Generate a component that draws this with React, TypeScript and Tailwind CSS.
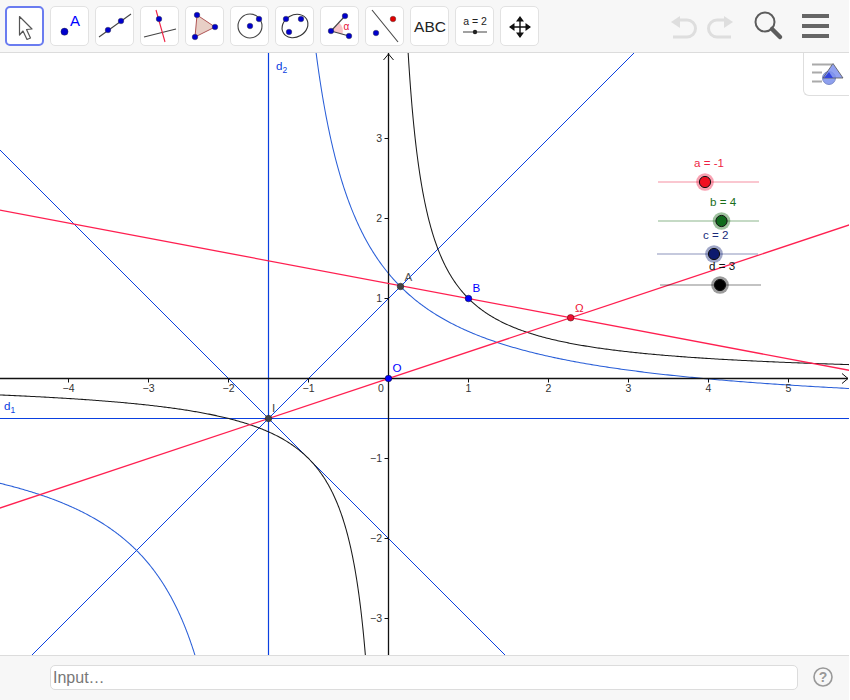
import React from "react";

const X = (x: number) => 388.5 + x * 80;
const Y = (y: number) => 378.5 - y * 80;
const L = (x1: number, y1: number, x2: number, y2: number) => ({ x1: X(x1), y1: Y(y1), x2: X(x2), y2: Y(y2) });

function hyper(cx: number, cy: number, k: number, from: number, to: number) {
  const pts: string[] = [];
  const n = 400;
  for (let i = 0; i <= n; i++) {
    const t = i / n;
    // denser sampling near the asymptote
    const x = from + (to - from) * t * t;
    const y = cy + k / (x - cx);
    pts.push(`${X(x).toFixed(2)},${Y(y).toFixed(2)}`);
  }
  return pts.join(" ");
}

const BLUE = "#0000cc";

function Dot({ x, y, r = 2.8, fill = BLUE }: { x: number; y: number; r?: number; fill?: string }) {
  return <circle cx={x} cy={y} r={r} fill={fill} stroke="#333" strokeWidth={0.4} />;
}

const icons: React.ReactNode[] = [
  <path d="M13.5 9.5 L26 22 L20.5 22.5 L24.5 31 L21 32.5 L17 24 L13.5 28 Z" fill="#fff" stroke="#555" strokeWidth="1.2" strokeLinejoin="round" />,
  <>
    <Dot x={14.5} y={25.7} r={3.6} />
    <text x={20} y={20} fontSize="15" fill="#0000ff" fontFamily="Liberation Sans">A</text>
  </>,
  <>
    <line x1="4" y1="31" x2="36" y2="8" stroke="#444" strokeWidth="1.1" />
    <Dot x={13} y={24} />
    <Dot x={26} y={15} />
  </>,
  <>
    <line x1="4" y1="31" x2="36" y2="23" stroke="#444" strokeWidth="1.1" />
    <line x1="16" y1="4" x2="25" y2="36" stroke="#ee2244" strokeWidth="1.1" />
    <Dot x={19} y={13} />
  </>,
  <>
    <polygon points="12,9 30,21 10,31" fill="#e8cfc6" stroke="#b05555" strokeWidth="1" />
    <Dot x={12} y={9} />
    <Dot x={30} y={21} />
    <Dot x={10} y={31} />
  </>,
  <>
    <circle cx="20" cy="20" r="12" fill="none" stroke="#444" strokeWidth="1.1" />
    <Dot x={20} y={20} />
    <Dot x={29} y={13} />
  </>,
  <>
    <ellipse cx="20" cy="20" rx="13.5" ry="11" transform="rotate(-30 20 20)" fill="none" stroke="#333" strokeWidth="1.1" />
    <Dot x={11} y={13} />
    <Dot x={26} y={13} />
    <Dot x={14} y={26} />
  </>,
  <>
    <path d="M11 25 L19 16.5 A12 12 0 0 1 22.5 28 Z" fill="#f8c4c8" />
    <line x1="11" y1="25" x2="25" y2="10" stroke="#444" strokeWidth="1.1" />
    <line x1="11" y1="25" x2="29" y2="30" stroke="#444" strokeWidth="1.1" />
    <Dot x={11} y={25} />
    <Dot x={25} y={10} />
    <Dot x={29} y={30} />
    <text x={23.5} y={24} fontSize="10" fill="#e8103a" fontFamily="Liberation Sans">α</text>
  </>,
  <>
    <line x1="7" y1="4" x2="33" y2="36" stroke="#444" strokeWidth="1.1" />
    <Dot x={28} y={13} fill="#e00000" />
    <Dot x={11} y={27} />
  </>,
  <text x="20" y="25.5" fontSize="15.5" textAnchor="middle" fill="#222" fontFamily="Liberation Sans">ABC</text>,
  <>
    <text x="20" y="19" fontSize="10.5" textAnchor="middle" fill="#222" fontFamily="Liberation Sans">a = 2</text>
    <line x1="8" y1="26" x2="32" y2="26" stroke="#555" strokeWidth="1.1" />
    <circle cx="20" cy="26" r="2.2" fill="#222" />
  </>,
  <>
    <path d="M20 12 V31 M10 21 H30" stroke="#111" strokeWidth="1.4" />
    <path d="M20 10 L24 15.5 H16 Z M20 32 L24 26.5 H16 Z M9 21 L14.5 17 V25 Z M31 21 L25.5 17 V25 Z" fill="#111" />
  </>,
];

const xTicks = [-4, -3, -2, -1, 1, 2, 3, 4, 5];
const yTicks = [-3, -2, -1, 1, 2, 3];
const FONT = "Liberation Sans";

function Slider({ x, y, dot, color, stroke, label, lx, ly }: { x: number; y: number; dot: number; color: string; stroke: string; label: string; lx: number; ly: number }) {
  return (
    <g>
      <line x1={x} y1={y} x2={x + 101} y2={y} stroke={stroke} strokeOpacity="0.5" strokeWidth="1.1" />
      <circle cx={dot} cy={y} r={8.8} fill={stroke} fillOpacity="0.42" />
      <circle cx={dot} cy={y} r={5.6} fill={color} stroke="#111" strokeWidth="1" />
      <text x={lx} y={ly} fontSize="11.6" fill={stroke} fontFamily={FONT}>{label}</text>
    </g>
  );
}

const LINE = "#0a40e0";
const CURVE = "#2a5fd8";
const RED = "#ff1f50";

export default function App() {
  return (
    <div className="flex h-[700px] w-[850px] flex-col bg-white font-['Liberation_Sans',sans-serif]">
      <header className="flex h-[53px] w-[849px] shrink-0 items-start border-b border-[#dcdcdc] bg-[#f7f7f7] pl-[5px] pt-[6px]">
        <div className="flex gap-[6px]">
          {icons.map((icon, i) => (
            <button
              key={i}
              className={
                i === 0
                  ? "h-[40px] w-[39px] rounded-[5px] border-2 border-[#6a7cf0] bg-white"
                  : "h-[40px] w-[39px] rounded-[5px] border border-[#e2e2e2] bg-white"
              }
            >
              <svg viewBox="0 0 39 40" className="-m-[1px] h-[40px] w-[39px]">
                {icon}
              </svg>
            </button>
          ))}
        </div>
        <div className="ml-[130px] mt-[7px] flex items-center">
          <svg width="30" height="26" viewBox="0 0 30 26">
            <path d="M11 5 H18 A8 8 0 0 1 18 22 H4" fill="none" stroke="#dedede" strokeWidth="3" />
            <path d="M2 7 L11 1 V13 Z" fill="#dedede" />
          </svg>
          <svg width="30" height="26" viewBox="0 0 30 26" className="ml-[6px]">
            <path d="M19 5 H12 A8 8 0 0 0 12 22 H26" fill="none" stroke="#dedede" strokeWidth="3" />
            <path d="M28 7 L19 1 V13 Z" fill="#dedede" />
          </svg>
          <svg width="32" height="32" viewBox="0 0 32 32" className="ml-[18px] -mt-[3px]">
            <circle cx="12" cy="12" r="9.5" fill="none" stroke="#5c5c5c" strokeWidth="2" />
            <line x1="19" y1="19" x2="27" y2="27" stroke="#5c5c5c" strokeWidth="4.5" strokeLinecap="round" />
          </svg>
          <div className="ml-[17px] -mt-[4px] flex flex-col gap-[6px]">
            <div className="h-[4px] w-[27px] bg-[#666666]" />
            <div className="h-[4px] w-[27px] bg-[#666666]" />
            <div className="h-[4px] w-[27px] bg-[#666666]" />
          </div>
        </div>
      </header>

      <main className="relative h-[602px] w-[849px] shrink-0 overflow-hidden bg-white">
        <svg viewBox="0 53 849 602" className="block h-[602px] w-[849px]">
          {/* asymptotes */}
          <line x1="0" y1="418.5" x2="849" y2="418.5" stroke={LINE} strokeWidth="1.2" />
          <line x1="268.5" y1="53" x2="268.5" y2="655" stroke={LINE} strokeWidth="1.2" />
          {/* diagonals */}
          <line {...L(-5, -4, 3.5, 4.5)} stroke={LINE} strokeWidth="1" />
          <line {...L(-5, 3, 2, -4)} stroke={LINE} strokeWidth="1" />

          {/* hyperbolas */}
          <polyline points={hyper(-1.5, -0.5, 2.72, -0.92, 5.8)} fill="none" stroke={CURVE} strokeWidth="1.05" />
          <polyline points={hyper(-1.5, -0.5, 2.72, -2.1, -4.9)} fill="none" stroke={CURVE} strokeWidth="1.05" />
          <polyline points={hyper(0, 0, 1, 0.22, 5.8)} fill="none" stroke="#1a1a1a" strokeWidth="1.05" />
          <polyline points={hyper(0, 0, 1, -0.25, -4.9)} fill="none" stroke="#1a1a1a" strokeWidth="1.05" />

          {/* axes */}
          <line x1="0" y1="378.5" x2="848" y2="378.5" stroke="#111" strokeWidth="1.3" />
          <line x1="388.5" y1="53" x2="388.5" y2="655" stroke="#111" strokeWidth="1.3" />
          <path d="M842 373.5 L848 378.5 L842 383.5" fill="none" stroke="#111" strokeWidth="1" />
          <path d="M383.5 60 L388.5 54 L393.5 60" fill="none" stroke="#111" strokeWidth="1" />
          {xTicks.map((t) => (
            <g key={t}>
              <line x1={X(t)} y1="378.5" x2={X(t)} y2="382.5" stroke="#111" strokeWidth="1" />
              <text x={X(t)} y="392" fontSize="10.5" textAnchor="middle" fill="#333" fontFamily={FONT}>
                {t < 0 ? `\u2212${-t}` : t}
              </text>
            </g>
          ))}
          <text x="381" y="392" fontSize="10.5" textAnchor="middle" fill="#333" fontFamily={FONT}>0</text>
          {yTicks.map((t) => (
            <g key={t}>
              <line x1="384.5" y1={Y(t)} x2="388.5" y2={Y(t)} stroke="#111" strokeWidth="1" />
              <text x="382" y={Y(t) + 3.5} fontSize="10.5" textAnchor="end" fill="#333" fontFamily={FONT}>
                {t < 0 ? `\u2212${-t}` : t}
              </text>
            </g>
          ))}

          {/* red lines */}
          <line {...L(-4.9, -4.9 / 3, 5.8, 5.8 / 3)} stroke={RED} strokeWidth="1.3" />
          <line {...L(-4.9, 1 + 5.9 * 0.1886, 5.8, 1 - 4.8 * 0.1886)} stroke={RED} strokeWidth="1.3" />

          {/* points */}
          <circle cx={X(0.15)} cy={Y(1.15)} r="3.3" fill="#444" stroke="#222" strokeWidth="0.5" />
          <circle cx={X(-1.5)} cy={Y(-0.5)} r="3.3" fill="#444" stroke="#222" strokeWidth="0.5" />
          <circle cx={X(1)} cy={Y(1)} r="3.3" fill="#0000ff" stroke="#002" strokeWidth="0.5" />
          <circle cx={X(0)} cy={Y(0)} r="3.3" fill="#0000ff" stroke="#002" strokeWidth="0.5" />
          <circle cx={X(2.277)} cy={Y(0.759)} r="3.3" fill="#ee1133" stroke="#400" strokeWidth="0.5" />

          <g fontFamily={FONT} fontSize="11.6">
            <text x="404.5" y="280.5" fill="#555">A</text>
            <text x="472.5" y="292" fill="#0000ff">B</text>
            <text x="392.5" y="372" fill="#0000ff">O</text>
            <text x="575" y="312" fill="#ee1133">Ω</text>
            <text x="272" y="412" fill="#444">I</text>
            <text x="276" y="70" fill="#0a40e0">d<tspan fontSize="8.5" dy="3">2</tspan></text>
            <text x="4" y="410" fill="#0a40e0">d<tspan fontSize="8.5" dy="3">1</tspan></text>
          </g>

          <Slider x={658} y={182} dot={705} color="#f01020" stroke="#ee1f44" label="a = -1" lx={694} ly={167} />
          <Slider x={658} y={221} dot={721.5} color="#0f6a1c" stroke="#1a6e1a" label="b = 4" lx={710} ly={206} />
          <Slider x={657} y={254} dot={714} color="#0d1a6e" stroke="#1a2a7a" label="c = 2" lx={703} ly={239} />
          <Slider x={660} y={285} dot={720} color="#000000" stroke="#111111" label="d = 3" lx={709} ly={270} />
        </svg>

        <div className="absolute right-0 top-0 flex h-[43px] w-[46px] items-center justify-center rounded-bl-[6px] border-b border-l border-[#dedede] bg-white">
          <svg width="34" height="26" viewBox="0 0 34 26">
            <path d="M2 3.5 H22 M2 11.5 H12 M2 20.5 H12" stroke="#aaaaaa" strokeWidth="2.2" fill="none" />
            <circle cx="19" cy="17" r="6.5" fill="#8ea0ee" stroke="#6677bb" strokeWidth="0.8" />
            <polygon points="23,2.5 33,17 13,17" fill="#7f92ee" fillOpacity="0.85" stroke="#555" strokeWidth="0.8" />
            <polygon points="19,11 23,17 14,17" fill="#3344dd" />
          </svg>
        </div>
      </main>

      <footer className="flex h-[45px] w-[849px] shrink-0 items-start border-t border-[#dcdcdc] bg-[#f7f7f7] pl-[50px] pt-[9px]">
        <input
          readOnly
          placeholder="Input…"
          className="h-[25px] w-[748px] rounded-[5px] border border-[#dcdcdc] bg-white px-[2px] text-[16px] text-[#333] outline-none placeholder:text-[#777777]"
        />
        <svg width="20" height="20" viewBox="0 0 20 20" className="ml-[15px] mt-[2px]">
          <circle cx="10" cy="10" r="9" fill="none" stroke="#999999" strokeWidth="1.6" />
          <text x="10" y="15" fontSize="14" fontWeight="700" textAnchor="middle" fill="#999999" fontFamily="Liberation Sans">?</text>
        </svg>
      </footer>
    </div>
  );
}
